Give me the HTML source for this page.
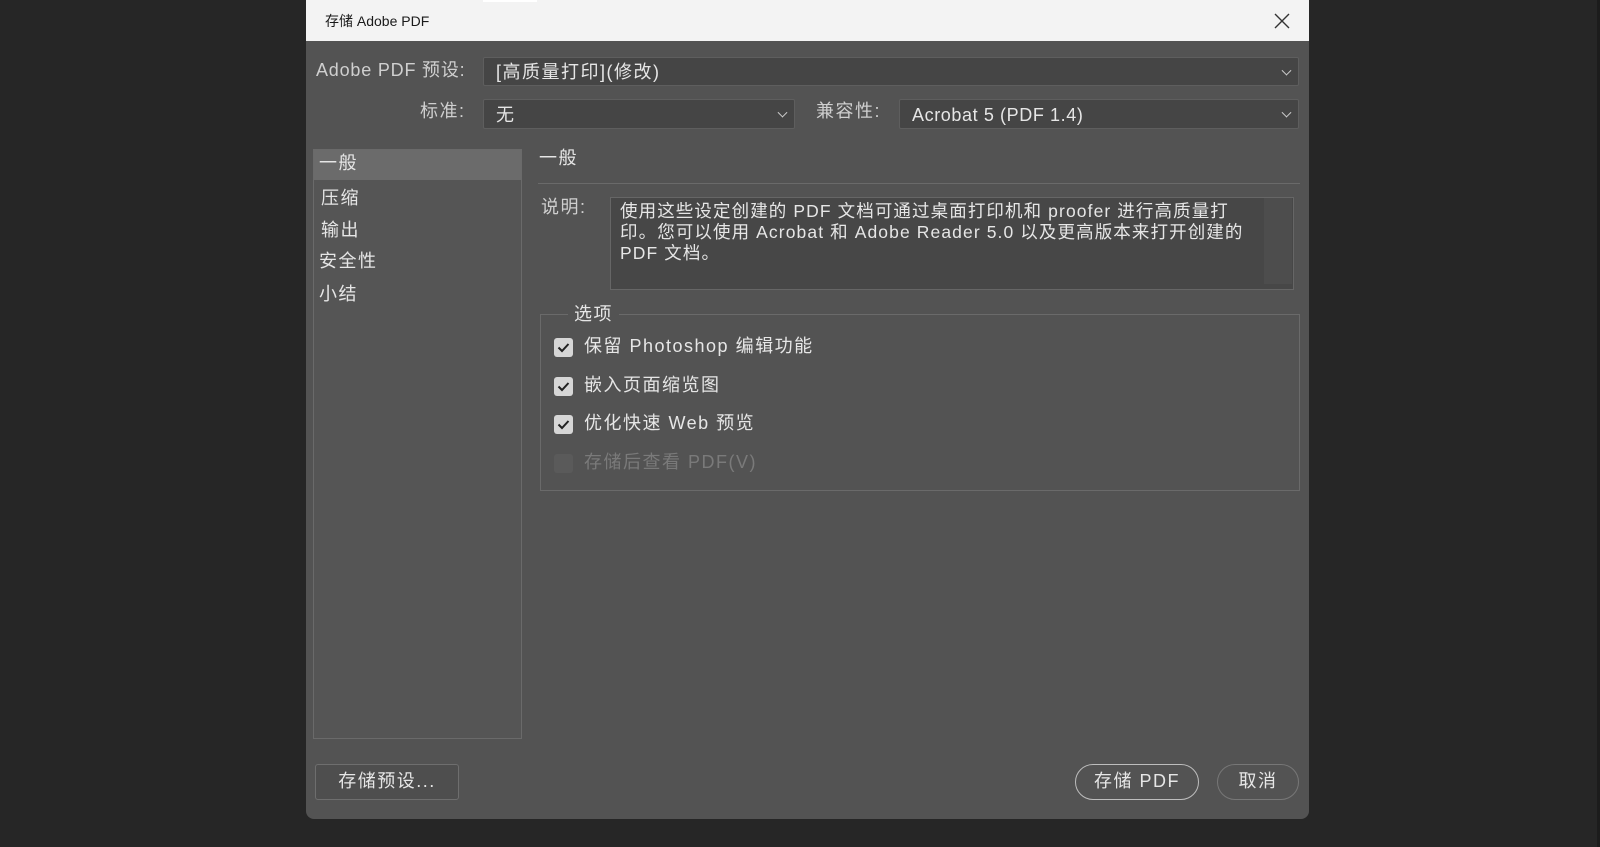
<!DOCTYPE html>
<html><head><meta charset="utf-8"><style>
*{margin:0;padding:0;box-sizing:border-box}
body{width:1600px;height:847px;background:#262626;position:relative;overflow:hidden;font-family:"Liberation Sans","Noto Sans CJK SC",sans-serif;color:#e6e6e6}
.a{position:absolute}
#dlg{left:306px;top:0;width:1003px;height:819px;background:#535353;border-radius:0 0 8px 8px;overflow:hidden}
#tb{left:0;top:0;width:1003px;height:41px;background:#f3f3f3;color:#1a1a1a;font-size:14px}
.t{font-size:18px;white-space:nowrap;line-height:22px;letter-spacing:1.5px}
.sel{background:#454545;border:1px solid #5e5e5e;border-radius:2px}
.chev{position:absolute;right:8px;top:50%;width:7px;height:7px;border-right:1.5px solid #ccc;border-bottom:1.5px solid #ccc;transform:translateY(-70%) rotate(45deg)}
.cb{width:19px;height:19px;background:#d6d6d6;border-radius:3px}
.cb svg{position:absolute;left:3px;top:4px}
.btn{border:1.5px solid #bdbdbd;border-radius:18px;text-align:center;font-size:18px;line-height:33px;letter-spacing:1.5px}
</style></head><body>
<div id="dlg" class="a">
 <div id="tb" class="a"><span class="a" style="left:19px;top:11px">存储 Adobe PDF</span>
  <svg class="a" style="left:968px;top:13px" width="16" height="16"><path d="M1 1L15 15M15 1L1 15" stroke="#333" stroke-width="1.4"/></svg></div>
 <div class="a" style="left:177px;top:0;width:54px;height:2px;background:#fff"></div>
 <span class="a t" style="left:10px;top:59px;color:#cfcfcf;letter-spacing:0.8px">Adobe PDF 预设:</span>
 <div class="a sel" style="left:177px;top:57px;width:816px;height:29px"><span class="a t" style="left:12px;top:3px">[高质量打印](修改)</span><i class="chev"></i></div>
 <span class="a t" style="left:114px;top:100px;color:#cfcfcf">标准:</span>
 <div class="a sel" style="left:177px;top:99px;width:312px;height:30px"><span class="a t" style="left:12px;top:4px">无</span><i class="chev"></i></div>
 <span class="a t" style="left:510px;top:100px;color:#cfcfcf">兼容性:</span>
 <div class="a sel" style="left:593px;top:99px;width:400px;height:30px"><span class="a t" style="left:12px;top:4px;letter-spacing:0.6px">Acrobat 5 (PDF 1.4)</span><i class="chev"></i></div>
 <div class="a" style="left:7px;top:149px;width:209px;height:590px;border:1px solid #6a6a6a;background:#555"></div>
 <div class="a" style="left:8px;top:150px;width:207px;height:30px;background:#6b6b6b"></div>
 <span class="a t" style="left:13px;top:152px">一般</span>
 <span class="a t" style="left:15px;top:187px">压缩</span>
 <span class="a t" style="left:15px;top:219px">输出</span>
 <span class="a t" style="left:13px;top:250px">安全性</span>
 <span class="a t" style="left:13px;top:283px">小结</span>
 <span class="a t" style="left:233px;top:147px">一般</span>
 <div class="a" style="left:232px;top:183px;width:762px;height:1px;background:#6a6a6a"></div>
 <span class="a t" style="left:235px;top:196px;color:#cfcfcf">说明:</span>
 <div class="a" style="left:304px;top:197px;width:684px;height:93px;background:#474747;border:1px solid #666"></div>
 <div class="a" style="left:958px;top:198px;width:28px;height:86px;background:#4d4d4d"></div>
 <div class="a" style="left:314px;top:201px;width:650px;font-size:17.5px;line-height:21px;letter-spacing:1.1px;white-space:nowrap">使用这些设定创建的 PDF 文档可通过桌面打印机和 proofer 进行高质量打<br>印。您可以使用 Acrobat 和 Adobe Reader 5.0 以及更高版本来打开创建的<br>PDF 文档。</div>
 <div class="a" style="left:234px;top:314px;width:760px;height:177px;border:1px solid #6a6a6a"></div>
 <span class="a t" style="left:262px;top:303px;padding:0 6px;background:#535353">选项</span>
 <div class="a cb" style="left:248px;top:338px"><svg width="13" height="11"><path d="M1.5 5.5L5 9L11.5 2" fill="none" stroke="#222" stroke-width="2"/></svg></div>
 <span class="a t" style="left:278px;top:335px">保留 Photoshop 编辑功能</span>
 <div class="a cb" style="left:248px;top:377px"><svg width="13" height="11"><path d="M1.5 5.5L5 9L11.5 2" fill="none" stroke="#222" stroke-width="2"/></svg></div>
 <span class="a t" style="left:278px;top:374px">嵌入页面缩览图</span>
 <div class="a cb" style="left:248px;top:415px"><svg width="13" height="11"><path d="M1.5 5.5L5 9L11.5 2" fill="none" stroke="#222" stroke-width="2"/></svg></div>
 <span class="a t" style="left:278px;top:412px">优化快速 Web 预览</span>
 <div class="a" style="left:248px;top:454px;width:19px;height:19px;background:#5a5a5a;border-radius:3px"></div>
 <span class="a t" style="left:278px;top:451px;color:#7a7a7a">存储后查看 PDF(V)</span>
 <div class="a btn" style="left:9px;top:764px;width:144px;height:36px;border-radius:3px;border-color:#6e6e6e;background:#4e4e4e">存储预设...</div>
 <div class="a btn" style="left:769px;top:764px;width:124px;height:36px">存储 PDF</div>
 <div class="a btn" style="left:911px;top:764px;width:82px;height:36px;border-color:#777">取消</div>
</div>
<div class="a" style="left:1597px;top:0;width:3px;height:847px;background:#1c1c1c"></div>
</body></html>
